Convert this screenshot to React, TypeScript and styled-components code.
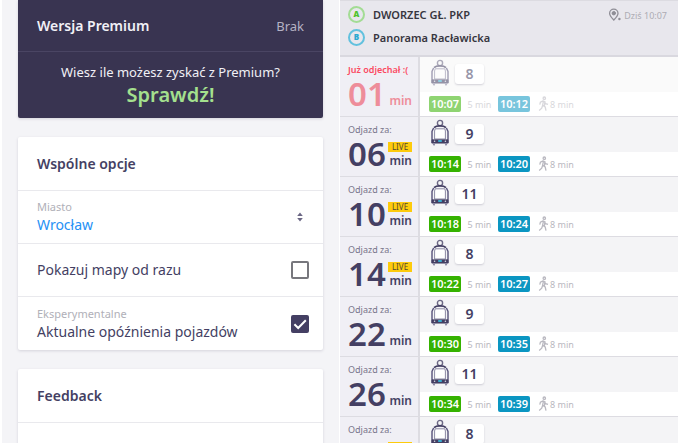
import React, { useState } from "react";
import styled, { createGlobalStyle } from "styled-components";

const navy = "#443f63";

const GlobalStyle = createGlobalStyle`
  * { box-sizing: border-box; }
  body {
    margin: 0;
    background: #fff;
    color: ${navy};
    font-family: "Noto Sans", "Open Sans", sans-serif;
    font-size: 14px;
  }
  h2, p, ul { margin: 0; padding: 0; }
  button, input, select { font: inherit; }
`;

const Screens = styled.main`
  display: grid;
  grid-template-columns: 337fr 338fr;
  column-gap: 1px;
  height: 100vh;
  padding-left: 2px;
  overflow: hidden;
`;

/* ---------- settings ---------- */

const Settings = styled.section`
  display: flex;
  flex-direction: column;
  gap: 19px;
  padding: 0 16px;
  background: #f4f4f7;
  overflow: hidden;
`;

const Card = styled.section`
  flex: none;
  background: #fff;
  border-radius: 2px;
  box-shadow: 0 1px 3px rgba(50, 45, 80, 0.16);
`;

const PremiumCard = styled(Card)`
  background: #393451;
  border-radius: 0 0 2px 2px;
  color: #f1f0f6;
`;

const PremiumHead = styled.header`
  display: flex;
  align-items: center;
  justify-content: space-between;
  height: 52px;
  padding: 0 19px;
  border-bottom: 1px solid #4a4563;
`;

const CardTitle = styled.h2`
  font-size: 14px;
  line-height: 20px;
  font-weight: 600;
`;

const PlanName = styled.span`
  font-size: 13px;
  color: #b5b2c4;
`;

const Promo = styled.div`
  display: flex;
  flex-direction: column;
  align-items: center;
  height: 66px;
  padding-top: 10px;
`;

const PromoText = styled.p`
  font-size: 13px;
  line-height: 20px;
  white-space: nowrap;
`;

const PromoButton = styled.button`
  padding: 0;
  border: 0;
  background: none;
  color: #a4e08e;
  font-size: 20px;
  line-height: 26px;
  font-weight: 600;
  cursor: pointer;
`;

const CardHead = styled.header`
  display: flex;
  align-items: center;
  height: 54px;
  padding: 0 19px;
  border-bottom: 1px solid #e9e9ed;
`;

const Option = styled.label`
  display: grid;
  grid-template-columns: 1fr auto;
  align-items: center;
  height: 53px;
  padding: 0 14px 0 19px;
  border-bottom: 1px solid #e9e9ed;
  &:last-child { border-bottom: 0; }
`;

const OptionText = styled.span`
  display: flex;
  flex-direction: column;
`;

const Caption = styled.span`
  font-size: 11px;
  line-height: 16px;
  color: #b0b0b8;
`;

const OptionName = styled.span`
  font-size: 14px;
  line-height: 20px;
`;

const CitySelect = styled.select`
  appearance: none;
  height: 20px;
  padding: 0;
  border: 0;
  background: none;
  color: #2591f5;
  font-size: 14px;
  line-height: 20px;
`;

const ArrowSlot = styled.span`
  display: flex;
  justify-content: center;
  width: 18px;
`;

const Tick = styled.span`
  position: relative;
  display: block;
  width: 18px;
  height: 18px;
  svg { position: absolute; inset: 0; pointer-events: none; }
`;

const TickInput = styled.input`
  appearance: none;
  display: block;
  width: 18px;
  height: 18px;
  margin: 0;
  border: 2px solid #77777d;
  border-radius: 2px;
  background: #fff;
  &:checked { border-color: ${navy}; background: ${navy}; }
`;

function TickOption({ caption, name, initial }: { caption?: string; name: string; initial: boolean }) {
  const [on, setOn] = useState(initial);
  return (
    <Option>
      <OptionText>
        {caption && <Caption>{caption}</Caption>}
        <OptionName>{name}</OptionName>
      </OptionText>
      <Tick>
        <TickInput type="checkbox" checked={on} onChange={(e) => setOn(e.target.checked)} />
        {on && (
          <svg width="18" height="18" viewBox="0 0 18 18" fill="none" aria-hidden="true">
            <path d="M3.4 9.2 7.2 13 14.8 5.2" stroke="#fff" strokeWidth="2" />
          </svg>
        )}
      </Tick>
    </Option>
  );
}

/* ---------- departures ---------- */

const Board = styled.section`
  display: flex;
  flex-direction: column;
  background: #f4f4f7;
  overflow: hidden;
`;

const BoardHead = styled.header`
  flex: none;
  display: flex;
  justify-content: space-between;
  height: 57px;
  padding: 4px 11px 0 8px;
  background: #e8e7ed;
  border-top: 1px solid #dcdbe1;
  border-bottom: 2px solid #d9d8df;
`;

const Stops = styled.div`
  display: flex;
  flex-direction: column;
  gap: 5px;
`;

const Stop = styled.div`
  display: flex;
  align-items: center;
  gap: 8px;
  height: 18px;
  color: #37363f;
  font-size: 11px;
  font-weight: 600;
`;

const StopMark = styled.span<{ $ring: string; $fill: string }>`
  display: grid;
  place-items: center;
  width: 17px;
  height: 17px;
  border: 2px solid ${(p) => p.$ring};
  border-radius: 50%;
  color: ${(p) => p.$fill};
  font-size: 8px;
  line-height: 8px;
  font-weight: 900;
`;

const When = styled.div`
  display: flex;
  align-items: center;
  gap: 2px;
  height: 20px;
  color: #adacb4;
  font-size: 9px;
`;

const Rows = styled.ul`
  list-style: none;
`;

const Row = styled.li<{ $gone: boolean }>`
  display: grid;
  grid-template-columns: 80px 1fr;
  height: 60px;
  border-bottom: 1px solid #dddce2;
  --num: ${(p) => (p.$gone ? "#ee8d9a" : navy)};
  --label: ${(p) => (p.$gone ? "#fb4a62" : "#77748a")};
  --top: ${(p) => (p.$gone ? "#fafafa" : "#f4f4f6")};
  --faded: ${(p) => (p.$gone ? 0.55 : 1)};
`;

const Wait = styled.div`
  display: flex;
  flex-direction: column;
  padding: 6px 6px 0 8px;
  background: #f0eff5;
  border-right: 2px solid #dddce2;
`;

const WaitLabel = styled.span<{ $bold: boolean }>`
  color: var(--label);
  font-size: 9px;
  line-height: 14px;
  font-weight: ${(p) => (p.$bold ? 600 : 400)};
  white-space: nowrap;
`;

const WaitTime = styled.div`
  display: flex;
  justify-content: space-between;
  color: var(--num);
`;

const Minutes = styled.span`
  font-size: 33px;
  line-height: 33px;
  font-weight: 600;
`;

const UnitColumn = styled.span`
  display: flex;
  flex-direction: column;
  align-items: flex-end;
  justify-content: flex-end;
`;

const Live = styled.span`
  width: 24px;
  height: 10px;
  background: #fdcb0c;
  color: #55492f;
  font-size: 8px;
  line-height: 10px;
  text-align: center;
`;

const Unit = styled.span`
  font-size: 12px;
  line-height: 18px;
  font-weight: 600;
`;

const Trip = styled.div`
  display: grid;
  grid-template-rows: 35px 1fr;
  background: #fff;
`;

const Vehicle = styled.div`
  display: flex;
  align-items: flex-start;
  gap: 5px;
  padding: 2px 0 0 10px;
  background: var(--top);
  svg { opacity: var(--faded); }
`;

const Line = styled.span`
  width: 29px;
  height: 20px;
  margin-top: 5px;
  border-radius: 3px;
  background: #fff;
  box-shadow: 0 1px 2px rgba(50, 45, 80, 0.2);
  font-size: 14px;
  line-height: 20px;
  font-weight: 600;
  text-align: center;
`;

const LineNumber = styled.span`
  opacity: var(--faded);
`;

const Times = styled.div`
  display: flex;
  align-items: center;
  padding-left: 9px;
  color: #b9b8c0;
  font-size: 9px;
`;

const Clock = styled.time<{ $color: string }>`
  width: 32px;
  height: 16px;
  border-radius: 2px;
  background: ${(p) => p.$color};
  color: #fff;
  font-size: 11px;
  line-height: 16px;
  font-weight: 600;
  text-align: center;
  opacity: var(--faded);
`;

const Ride = styled.span`
  width: 37px;
  text-align: center;
  opacity: var(--faded);
`;

const Walk = styled.span`
  display: flex;
  align-items: center;
  gap: 1px;
  padding-left: 8px;
  opacity: var(--faded);
`;

const TramIcon = () => (
  <svg width="20" height="28" viewBox="0 0 20 28" fill="none" stroke="#443f63" aria-hidden="true">
    <circle cx="10" cy="4" r="2.6" stroke="#6b6784" strokeWidth="1.4" />
    <path d="M4 8.6C6.4 6.4 13.6 6.4 16 8.6" strokeWidth="1.8" />
    <path d="M3.6 9 2 12.4v11.2h16V12.4L16.4 9" stroke="#57527a" strokeWidth="1.4" />
    <path d="M5.2 9.8h9.6l.6 2.2v8H4.6v-8z" stroke="#8b88a3" strokeWidth="1" fill="#fff" />
    <path d="M2 20.8h16V24H2z" fill="#443f63" strokeWidth="0.8" />
    <circle cx="4.6" cy="22.2" r="0.8" fill="#d8d7e2" stroke="none" />
    <circle cx="15.4" cy="22.2" r="0.8" fill="#d8d7e2" stroke="none" />
    <path d="M8.2 22h3.6" stroke="#39b8dc" strokeWidth="1.8" />
    <path d="M4.4 24.4 3.6 26.4M15.6 24.4l.8 2" stroke="#8b88a3" strokeWidth="1.8" />
  </svg>
);

const WalkIcon = () => (
  <svg width="11" height="16" viewBox="0 0 11 16" fill="none" stroke="#b9b8c0" strokeWidth="1.3" aria-hidden="true">
    <circle cx="6.3" cy="2.2" r="1.2" />
    <path d="M5.6 4.6 4.6 9.2 7.2 11l.8 3.6M4.7 9.2l-1 3-2.5 2.2M5.6 4.6 2.4 6.2l-.6 2.4M6 5l1.6 2.6 2.4.8M7 5.2 6.4 9.8" />
  </svg>
);

const PinIcon = () => (
  <svg width="14" height="14" viewBox="0 0 14 14" fill="none" stroke="#8f8e96" aria-hidden="true">
    <path d="M5.8 12C3 9 1.6 7.4 1.6 5.4a4.2 4.2 0 0 1 8.4 0c0 2-1.4 3.6-4.2 6.6z" strokeWidth="1.3" />
    <circle cx="5.8" cy="5.2" r="1.7" fill="#8f8e96" />
    <circle cx="11.4" cy="11" r="1.2" fill="#8f8e96" stroke="none" />
  </svg>
);

const departures = [
  { wait: "01", line: "8", from: "10:07", to: "10:12", live: false, gone: true },
  { wait: "06", line: "9", from: "10:14", to: "10:20", live: true, gone: false },
  { wait: "10", line: "11", from: "10:18", to: "10:24", live: true, gone: false },
  { wait: "14", line: "8", from: "10:22", to: "10:27", live: true, gone: false },
  { wait: "22", line: "9", from: "10:30", to: "10:35", live: false, gone: false },
  { wait: "26", line: "11", from: "10:34", to: "10:39", live: false, gone: false },
  { wait: "30", line: "8", from: "10:38", to: "10:43", live: true, gone: false },
];

export default function App() {
  return (
    <>
      <GlobalStyle />
      <Screens>
        <Settings>
          <PremiumCard>
            <PremiumHead>
              <CardTitle>Wersja Premium</CardTitle>
              <PlanName>Brak</PlanName>
            </PremiumHead>
            <Promo>
              <PromoText>Wiesz ile możesz zyskać z Premium?</PromoText>
              <PromoButton type="button">Sprawdź!</PromoButton>
            </Promo>
          </PremiumCard>

          <Card>
            <CardHead>
              <CardTitle>Wspólne opcje</CardTitle>
            </CardHead>
            <Option>
              <OptionText>
                <Caption>Miasto</Caption>
                <CitySelect defaultValue="Wrocław">
                  <option>Wrocław</option>
                </CitySelect>
              </OptionText>
              <ArrowSlot>
                <svg width="6" height="10" viewBox="0 0 6 10" fill="#6b6784" aria-hidden="true">
                  <path d="M3 0.4 5.8 4H0.2zM3 9.6 5.8 6H0.2z" />
                </svg>
              </ArrowSlot>
            </Option>
            <TickOption name="Pokazuj mapy od razu" initial={false} />
            <TickOption caption="Eksperymentalne" name="Aktualne opóźnienia pojazdów" initial />
          </Card>

          <Card>
            <CardHead>
              <CardTitle>Feedback</CardTitle>
            </CardHead>
            <Option as="div" />
          </Card>
        </Settings>

        <Board>
          <BoardHead>
            <Stops>
              <Stop>
                <StopMark $ring="#a3dc94" $fill="#4fc22c">A</StopMark>
                DWORZEC GŁ. PKP
              </Stop>
              <Stop>
                <StopMark $ring="#62c1de" $fill="#2ba9d0">B</StopMark>
                Panorama Racławicka
              </Stop>
            </Stops>
            <When>
              <PinIcon />
              Dziś 10:07
            </When>
          </BoardHead>
          <Rows>
            {departures.map((d) => (
              <Row key={d.wait} $gone={d.gone}>
                <Wait>
                  <WaitLabel $bold={d.gone}>{d.gone ? "Już odjechał :(" : "Odjazd za:"}</WaitLabel>
                  <WaitTime>
                    <Minutes>{d.wait}</Minutes>
                    <UnitColumn>
                      {d.live && <Live>LIVE</Live>}
                      <Unit>min</Unit>
                    </UnitColumn>
                  </WaitTime>
                </Wait>
                <Trip>
                  <Vehicle>
                    <TramIcon />
                    <Line>
                      <LineNumber>{d.line}</LineNumber>
                    </Line>
                  </Vehicle>
                  <Times>
                    <Clock $color="#35b200">{d.from}</Clock>
                    <Ride>5 min</Ride>
                    <Clock $color="#0b96c2">{d.to}</Clock>
                    <Walk>
                      <WalkIcon />8 min
                    </Walk>
                  </Times>
                </Trip>
              </Row>
            ))}
          </Rows>
        </Board>
      </Screens>
    </>
  );
}
